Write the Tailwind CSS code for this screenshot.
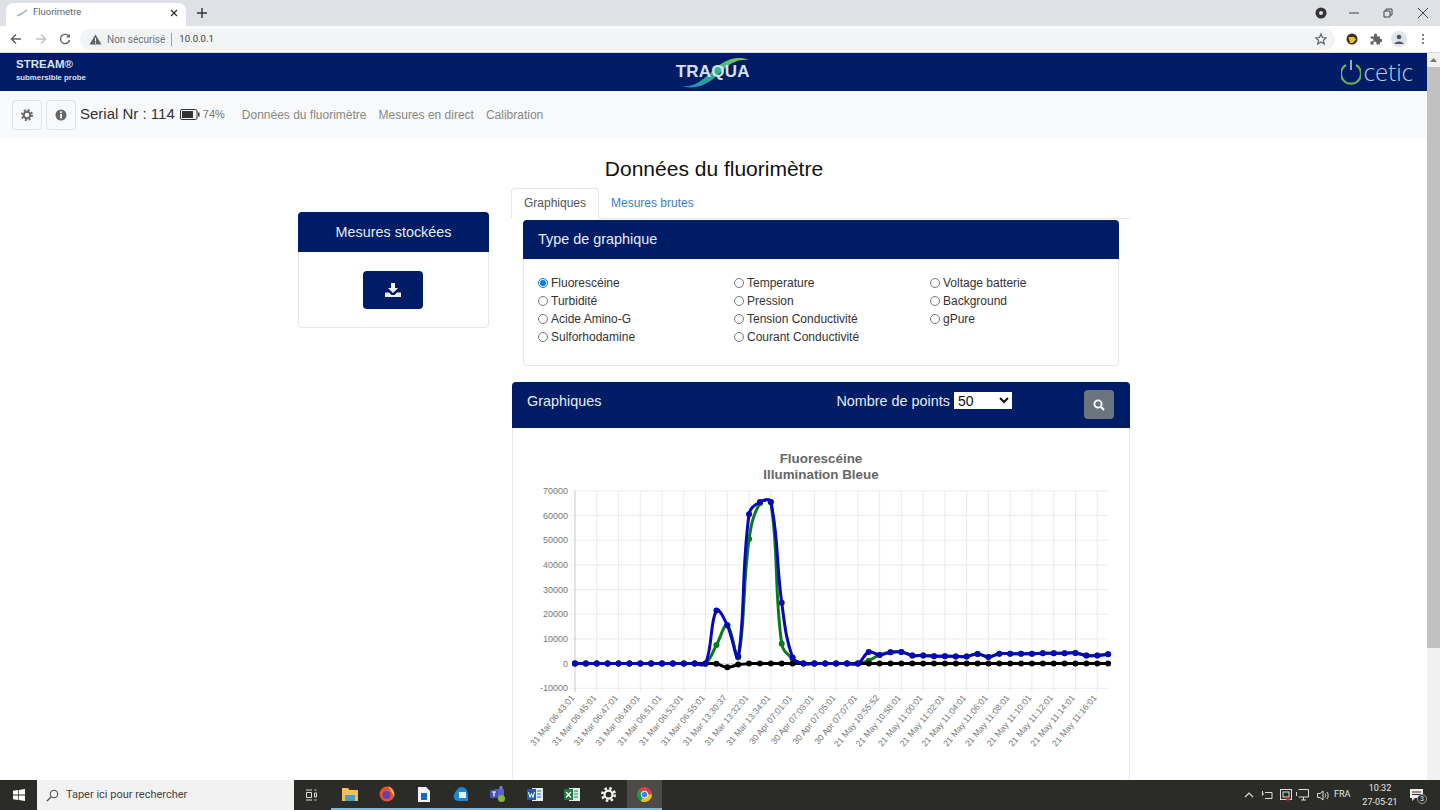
<!DOCTYPE html>
<html lang="fr">
<head>
    <meta charset="UTF-8">
    <meta name="viewport" content="width=device-width, initial-scale=1.0">
    <title>Fluorimetre</title>
    <script src="https://cdn.jsdelivr.net/npm/@tailwindcss/browser@4"></script>
</head>
<body class="bg-white font-['Liberation_Sans',Arial,sans-serif]">
<div class="h-[810px] w-[1440px] flex flex-col overflow-hidden">

    <!-- chrome: tab strip -->
    <div class="h-[26px] bg-[#dee1e6] flex items-end font-['Roboto',sans-serif]">
        <div class="ml-[6px] w-[180px] h-[23px] bg-white rounded-t-lg flex items-center pl-[10px] pr-[8px] pb-[4px]">
            <svg width="12" height="8" viewBox="0 0 12 8"><path d="M1 7 C4 6 7 4 11 1" stroke="#7fb8a0" stroke-width="1.2" fill="none"/></svg>
            <span class="ml-[5px] text-[9.5px] text-[#5f6368]">Fluorimetre</span>
            <svg class="ml-auto" width="8" height="8" viewBox="0 0 8 8"><path d="M1 1 L7 7 M7 1 L1 7" stroke="#333" stroke-width="1.3"/></svg>
        </div>
        <svg class="ml-[11px] mb-[8px]" width="10" height="10" viewBox="0 0 10 10"><path d="M5 0 V10 M0 5 H10" stroke="#333" stroke-width="1.4"/></svg>
        <div class="ml-auto flex items-center h-[26px]">
            <svg class="ml-px" width="12" height="12" viewBox="0 0 12 12"><circle cx="6" cy="6" r="5.5" fill="#333"/><circle cx="6" cy="6" r="2" fill="#ddd"/></svg>
            <svg class="ml-[22px]" width="10" height="10" viewBox="0 0 10 10"><path d="M0 5 H10" stroke="#444" stroke-width="1"/></svg>
            <svg class="ml-[24px]" width="10" height="10" viewBox="0 0 10 10"><path d="M1 3 H7 V9 H1 Z M3 3 V1 H9 V7 H7" stroke="#444" stroke-width="1" fill="none"/></svg>
            <svg class="ml-[25px] mr-[12px]" width="10" height="10" viewBox="0 0 10 10"><path d="M0 0 L10 10 M10 0 L0 10" stroke="#444" stroke-width="1"/></svg>
        </div>
    </div>

    <!-- chrome: toolbar -->
    <div class="h-[27px] bg-white flex items-center font-['Roboto',sans-serif] border-b border-[#dadce0]">
        <svg class="ml-[10px]" width="12" height="12" viewBox="0 0 12 12"><path d="M11 6 H1.5 M6 1.5 L1.5 6 L6 10.5" stroke="#5f6368" stroke-width="1.5" fill="none"/></svg>
        <svg class="ml-[13px]" width="12" height="12" viewBox="0 0 12 12"><path d="M1 6 H10.5 M6 1.5 L10.5 6 L6 10.5" stroke="#bdc1c6" stroke-width="1.5" fill="none"/></svg>
        <svg class="ml-[12px]" width="12" height="12" viewBox="0 0 12 12"><path d="M10 3.5 A4.6 4.6 0 1 0 10.6 7" stroke="#5f6368" stroke-width="1.4" fill="none"/><path d="M10.8 0.8 V4.6 H7 Z" fill="#5f6368"/></svg>
        <div class="ml-[9px] w-[1255px] h-[21px] bg-[#f1f3f4] rounded-full flex items-center pl-[9px] relative">
            <svg width="13" height="11" viewBox="0 0 13 11"><path d="M6.5 0.5 L12.5 10.5 H0.5 Z" fill="#5f6368"/><path d="M6.5 4 V7.2 M6.5 8.2 V9.4" stroke="#fff" stroke-width="1.1"/></svg>
            <span class="ml-[5px] text-[10px] text-[#70757a]">Non sécurisé</span>
            <span class="ml-[6px] h-[13px] w-px bg-[#9aa0a6]"></span>
            <span class="ml-[7px] text-[9.6px] text-[#3c4043]">10.0.0.1</span>
            <svg class="ml-auto mr-[8px]" width="12" height="12" viewBox="0 0 24 24"><path d="M12 2 L15 9 L22.5 9.7 L16.8 14.6 L18.6 22 L12 18 L5.4 22 L7.2 14.6 L1.5 9.7 L9 9 Z" fill="none" stroke="#5f6368" stroke-width="2.4"/></svg>
        </div>
        <svg class="ml-[11px]" width="12" height="12" viewBox="0 0 12 12"><circle cx="6" cy="6" r="5.5" fill="#3a3320"/><path d="M2.5 4 H8 L10 6.5 L7 10 H4 Z" fill="#f0bb2c"/></svg>
        <svg class="ml-[12px]" width="12" height="12" viewBox="0 0 12 12"><path d="M0.5 3.5 H4 V2 A1.5 1.5 0 0 1 7 2 V3.5 H10 V6 H11 A1.5 1.5 0 0 1 11 9 H10 V11.5 H6.5 V10 A1.5 1.5 0 0 0 3.5 10 V11.5 H0.5 V8.5 H2 A1.5 1.5 0 0 0 2 5.5 H0.5 Z" fill="#5f6368"/></svg>
        <div class="ml-[9px] w-[16px] h-[16px] rounded-full bg-[#dfe3ea] flex items-center justify-center">
            <svg width="10" height="10" viewBox="0 0 10 10"><circle cx="5" cy="3" r="2.3" fill="#4d5561"/><path d="M0.5 10 C0.5 6.5 9.5 6.5 9.5 10 Z" fill="#4d5561"/></svg>
        </div>
        <svg class="ml-[14px]" width="4" height="12" viewBox="0 0 4 12"><circle cx="2" cy="2" r="1.1" fill="#5f6368"/><circle cx="2" cy="6" r="1.1" fill="#5f6368"/><circle cx="2" cy="10" r="1.1" fill="#5f6368"/></svg>
    </div>

    <!-- page + scrollbar -->
    <div class="flex-1 min-h-0 flex">
        <div class="flex-1 min-w-0 overflow-hidden">

            <header class="h-[38px] bg-[#001c66] flex items-center justify-between">
                <div class="ml-[16px] mb-[3px] text-[#d9e2ee] font-bold leading-none">
                    <div class="text-[11.5px]">STREAM®</div>
                    <div class="text-[7.8px] mt-[3px]">submersible probe</div>
                </div>
                <div class="relative w-[76px] h-[38px] flex items-center justify-center ml-[-1px]">
                    <svg class="absolute left-0 top-0" width="76" height="38" viewBox="0 0 76 38">
                        <defs>
                            <linearGradient id="swoosh" x1="0" y1="1" x2="1" y2="0">
                                <stop offset="0" stop-color="#1f8fb0"/>
                                <stop offset="0.55" stop-color="#2fb58c"/>
                                <stop offset="1" stop-color="#8ccb4e"/>
                            </linearGradient>
                        </defs>
                        <path d="M7 33 C22 35 30 24 42 14 C50 7 62 2 74 7 C62 6 54 11 46 19 C36 29 22 38 7 33 Z" fill="url(#swoosh)"/>
                    </svg>
                    <span class="relative text-[17px] font-bold tracking-[0.2px] text-[#d6e0ec]">TRAQUA</span>
                </div>
                <div class="mr-[14px] flex items-center relative">
                    <svg width="20" height="26" viewBox="1 0 20 26"><path d="M6 6 A10 10 0 1 0 16 6" fill="none" stroke="#6fae55" stroke-width="2.2"/><path d="M11 1 V11" stroke="#dfe6ee" stroke-width="1.4"/></svg>
                    <span class="ml-[3px] text-[24px] leading-none font-['Open_Sans',sans-serif] font-light text-[#b9cbe3]">cetic</span>
                </div>
            </header>

            <nav class="h-[47px] bg-[#f8f9fa] flex items-center pl-[12px]">
                <button class="w-[30px] h-[30px] border border-[#dfe1e4] rounded flex items-center justify-center">
                    <svg width="12" height="12" viewBox="0 0 12 12"><circle cx="6" cy="6" r="3.3" fill="none" stroke="#666" stroke-width="2"/><circle cx="6" cy="6" r="5" fill="none" stroke="#666" stroke-width="2" stroke-dasharray="2 1.93"/></svg>
                </button>
                <button class="ml-[4px] w-[30px] h-[30px] border border-[#dfe1e4] rounded flex items-center justify-center">
                    <svg width="12" height="12" viewBox="0 0 12 12"><circle cx="6" cy="6" r="5.5" fill="#666"/><path d="M6 5 V9.5 M6 2.3 V3.9" stroke="#fff" stroke-width="1.8"/></svg>
                </button>
                <span class="ml-[4px] text-[15px] text-[#333]">Serial Nr : 114</span>
                <svg class="ml-[5px]" width="20" height="11" viewBox="0 0 20 11"><rect x="0.5" y="0.5" width="16.5" height="10" rx="1.5" fill="none" stroke="#333"/><rect x="2" y="2" width="11" height="7" fill="#333"/><rect x="18" y="3.5" width="1.5" height="4" fill="#333"/></svg>
                <span class="ml-[3px] text-[11px] text-[#777]">74%</span>
                <a class="ml-[17px] text-[12px] text-[#888]">Données du fluorimètre</a>
                <a class="ml-[12px] text-[12px] text-[#888]">Mesures en direct</a>
                <a class="ml-[12px] text-[12px] text-[#888]">Calibration</a>
            </nav>

            <main class="ml-[298px] w-[832px]">
                <h1 class="h-[50px] pt-[12px] flex items-center justify-center text-[21px] text-[#111]">Données du fluorimètre</h1>
                <div class="flex items-start gap-[22px]">

                    <section class="w-[191px] mt-[24px] h-[116px] border border-[#e6e6e6] rounded">
                        <div class="h-[40px] pt-[2px] mx-[-1px] mt-[-1px] bg-[#001c66] rounded-t flex items-center justify-center text-[14.4px] text-[#e6edf5]">Mesures stockées</div>
                        <div class="flex justify-center pt-[19px] pr-[1px]">
                            <button class="w-[60px] h-[38px] bg-[#001c66] rounded flex items-center justify-center">
                                <svg width="16" height="14" viewBox="0 0 16 14"><path d="M6 0 H10 V5 H13 L8 10 L3 5 H6 Z" fill="#f2f2f2"/><path d="M0 9.5 H4 L6.5 12 H9.5 L12 9.5 H16 V14 H0 Z" fill="#f2f2f2"/></svg>
                            </button>
                        </div>
                    </section>

                    <div class="w-[619px]">
                        <div class="h-[31px] flex border-b border-[#e6e6e6] text-[12px]">
                            <div class="w-[88px] h-[31px] pb-[2px] border border-[#e6e6e6] border-b-white rounded-t flex items-center justify-center text-[#555]">Graphiques</div>
                            <div class="ml-[12px] h-[30px] flex items-center text-[#3b7fc4]">Mesures brutes</div>
                        </div>

                        <section class="ml-[12px] mt-px w-[596px] h-[146px] border border-[#e6e6e6] rounded">
                            <div class="h-[39px] mx-[-1px] mt-[-1px] bg-[#001c66] rounded-t flex items-center pl-[15px] text-[14.4px] text-[#e6edf5]">Type de graphique</div>
                            <form class="grid grid-cols-[196px_196px_160px] pl-[14px] pt-[15px] text-[12px] leading-[18px] text-[#333]">
                                <label class="flex items-center"><input type="radio" name="g" checked class="w-[10px] h-[10px] mr-[3px] mb-[1px]"> Fluorescéine</label>
                                <label class="flex items-center"><input type="radio" name="g" class="w-[10px] h-[10px] mr-[3px] mb-[1px]"> Temperature</label>
                                <label class="flex items-center"><input type="radio" name="g" class="w-[10px] h-[10px] mr-[3px] mb-[1px]"> Voltage batterie</label>
                                <label class="flex items-center"><input type="radio" name="g" class="w-[10px] h-[10px] mr-[3px] mb-[1px]"> Turbidité</label>
                                <label class="flex items-center"><input type="radio" name="g" class="w-[10px] h-[10px] mr-[3px] mb-[1px]"> Pression</label>
                                <label class="flex items-center"><input type="radio" name="g" class="w-[10px] h-[10px] mr-[3px] mb-[1px]"> Background</label>
                                <label class="flex items-center"><input type="radio" name="g" class="w-[10px] h-[10px] mr-[3px] mb-[1px]"> Acide Amino-G</label>
                                <label class="flex items-center"><input type="radio" name="g" class="w-[10px] h-[10px] mr-[3px] mb-[1px]"> Tension Conductivité</label>
                                <label class="flex items-center"><input type="radio" name="g" class="w-[10px] h-[10px] mr-[3px] mb-[1px]"> gPure</label>
                                <label class="flex items-center"><input type="radio" name="g" class="w-[10px] h-[10px] mr-[3px] mb-[1px]"> Sulforhodamine</label>
                                <label class="flex items-center"><input type="radio" name="g" class="w-[10px] h-[10px] mr-[3px] mb-[1px]"> Courant Conductivité</label>
                            </form>
                        </section>

                        <section class="ml-px mt-[16px] w-[618px] border border-[#e6e6e6] rounded">
                            <div class="h-[46px] mx-[-1px] mt-[-1px] bg-[#001c66] rounded-t flex items-center text-[14.4px] text-[#e6edf5] relative">
                                <span class="ml-[15px] mb-[6px]">Graphiques</span>
                                <span class="ml-[235px] mb-[6px]">Nombre de points</span>
                                <select class="ml-[4px] mb-[9px] w-[58px] h-[17px] bg-white text-[#111] text-[14px] leading-none">
                                    <option>50</option>
                                    <option>100</option>
                                </select>
                                <button class="ml-[72px] mb-[1px] w-[30px] h-[29px] bg-[#6c757d] rounded flex items-center justify-center">
                                    <svg width="12" height="12" viewBox="0 0 12 12"><circle cx="5" cy="5" r="3.6" fill="none" stroke="#fff" stroke-width="1.8"/><path d="M7.8 7.8 L11 11" stroke="#fff" stroke-width="2"/></svg>
                                </button>
                            </div>
                            <svg id="chart" class="block" width="616" height="352" viewBox="513 428 616 352"></svg>
                        </section>
                    </div>
                </div>
            </main>
        </div>

        <!-- scrollbar -->
        <div class="w-[13px] bg-[#f1f1f1] flex flex-col items-center">
            <svg class="mt-[5px]" width="7" height="4" viewBox="0 0 7 4"><path d="M3.5 0 L7 4 H0 Z" fill="#777"/></svg>
            <div class="mt-[5px] w-full h-[581px] bg-[#c1c1c1]"></div>
        </div>
    </div>

    <!-- windows taskbar -->
    <footer class="h-[30px] bg-[#2b2b28] flex items-center text-[#e8e8e8] font-['Roboto',sans-serif]">
        <div class="w-[37px] flex justify-center">
            <svg width="12" height="12" viewBox="0 0 12 12"><path d="M0 1.8 L5.3 1 V5.6 H0 Z M6 0.9 L12 0 V5.6 H6 Z M0 6.4 H5.3 V11 L0 10.2 Z M6 6.4 H12 V12 L6 11.1 Z" fill="#fff"/></svg>
        </div>
        <div class="w-[257px] h-[30px] bg-[#f2f2f2] flex items-center pl-[9px]">
            <svg width="13" height="13" viewBox="0 0 13 13"><circle cx="8" cy="5" r="3.8" fill="none" stroke="#444"/><path d="M5.2 7.8 L1 12" stroke="#444" stroke-width="1.2"/></svg>
            <span class="ml-[7px] text-[11px] text-[#444]">Taper ici pour rechercher</span>
        </div>
        <div class="ml-[11px] w-[12px]">
            <svg width="12" height="12" viewBox="0 0 12 12"><path d="M1 1 H7 M1 11 H7 M9.5 1 H11.5 M9.5 11 H11.5 M9.5 4 H11.5 V8 H9.5 Z M1.5 3.5 H6.5 V8.5 H1.5 Z" stroke="#ddd" fill="none"/></svg>
        </div>
        <div class="ml-[14px] flex h-[30px]">
            <div class="w-[37px] border-b-2 border-[#76b9ed] flex items-center justify-center">
                <svg width="16" height="14" viewBox="0 0 16 14"><path d="M0 1 H6 L7.5 3 H16 V14 H0 Z" fill="#f2c14e"/><rect x="3" y="8" width="10" height="6" fill="#4a9dcc"/></svg>
            </div>
            <div class="w-[37px] border-b-2 border-[#76b9ed] flex items-center justify-center">
                <svg width="16" height="16" viewBox="0 0 16 16"><circle cx="8" cy="8" r="7.5" fill="#e8522a"/><circle cx="7.5" cy="9" r="4" fill="#6a3fb5"/><path d="M9 0 C14 2 16 7 15 11 C13 6 11 4 9 0 Z" fill="#ffb52e"/></svg>
            </div>
            <div class="w-[37px] border-b-2 border-[#76b9ed] flex items-center justify-center">
                <svg width="12" height="15" viewBox="0 0 12 15"><path d="M0 0 H8 L12 4 V15 H0 Z" fill="#f4f6f8"/><rect x="3" y="6" width="6" height="7" fill="#1668c5"/></svg>
            </div>
            <div class="w-[37px] border-b-2 border-[#76b9ed] flex items-center justify-center">
                <svg width="15" height="15" viewBox="0 0 15 15"><path d="M8 0 C13 0 15 4 15 8 V14 H6 C2 14 0 11 1 8 C2 4 5 1 8 0 Z" fill="#1c87d6"/><path d="M6 5 H13 V11 H6 Z" fill="#e8f1f8"/></svg>
            </div>
            <div class="w-[37px] border-b-2 border-[#76b9ed] flex items-center justify-center">
                <svg width="16" height="16" viewBox="0 0 16 16"><rect x="4" y="3" width="10" height="9" rx="1" fill="#5b5fc7"/><rect x="0" y="4" width="8" height="8" fill="#464eb8"/><path d="M2 6 H6 M4 6 V10.5" stroke="#fff" stroke-width="1.2"/><circle cx="11" cy="1.8" r="1.7" fill="#7b83eb"/><circle cx="11.5" cy="12.5" r="3.5" fill="#7fba3c"/></svg>
            </div>
            <div class="w-[37px] border-b-2 border-[#76b9ed] flex items-center justify-center">
                <svg width="16" height="15" viewBox="0 0 16 15"><rect x="5" y="1" width="11" height="13" fill="#e6eef8"/><path d="M10 4 H14 M10 7 H14 M10 10 H14" stroke="#2b65b5"/><rect x="0" y="2" width="9" height="11" fill="#1f5bb0"/><path d="M1.5 5 L3 10.5 L4.5 6.5 L6 10.5 L7.5 5" stroke="#fff" fill="none"/></svg>
            </div>
            <div class="w-[37px] border-b-2 border-[#76b9ed] flex items-center justify-center">
                <svg width="16" height="15" viewBox="0 0 16 15"><rect x="5" y="1" width="11" height="13" fill="#e2f0e6"/><path d="M10 4 H14 M10 7 H14 M10 10 H14" stroke="#1e7a45"/><rect x="0" y="2" width="9" height="11" fill="#1a7a41"/><path d="M2 5 L7 10.5 M7 5 L2 10.5" stroke="#fff" stroke-width="1.2"/></svg>
            </div>
            <div class="w-[37px] border-b-2 border-[#76b9ed] flex items-center justify-center">
                <svg width="15" height="15" viewBox="0 0 12 12"><circle cx="6" cy="6" r="3.2" fill="none" stroke="#f4f4f4" stroke-width="1.8"/><circle cx="6" cy="6" r="5" fill="none" stroke="#f4f4f4" stroke-width="2" stroke-dasharray="2 1.93"/></svg>
            </div>
            <div class="w-[35px] border-b-2 border-[#76b9ed] bg-[#4b4b48] flex items-center justify-center">
                <svg width="15" height="15" viewBox="0 0 16 16"><circle cx="8" cy="8" r="8" fill="#db4437"/><path d="M8 8 L15.9 8 A8 8 0 0 1 4 15 Z" fill="#f4c20d"/><path d="M8 8 L4 15 A8 8 0 0 1 1 4 Z" fill="#0f9d58"/><circle cx="8" cy="8" r="3.6" fill="#4285f4" stroke="#fff"/></svg>
            </div>
        </div>
        <div class="ml-auto flex items-center text-[9px]">
            <svg width="10" height="6" viewBox="0 0 10 6"><path d="M1 5 L5 1 L9 5" stroke="#ddd" stroke-width="1.2" fill="none"/></svg>
            <svg class="ml-[8px]" width="12" height="9" viewBox="0 0 12 9"><path d="M3 1.5 H10 V7.5 H3 M0.5 0 V4 M2 3 H0 V5" stroke="#ddd" fill="none"/></svg>
            <svg class="ml-[6px]" width="12" height="12" viewBox="0 0 12 12"><rect x="0.5" y="0.5" width="11" height="10" fill="none" stroke="#ddd"/><rect x="3" y="3" width="6" height="5" fill="none" stroke="#ddd"/><circle cx="8" cy="10" r="1.8" fill="#e8202a"/></svg>
            <svg class="ml-[4px]" width="13" height="12" viewBox="0 0 13 12"><path d="M2.5 0.5 H12.5 V8 H2.5 M7.5 8 V11 M5 11 H10 M0.5 3 V7" stroke="#ddd" fill="none"/></svg>
            <svg class="ml-[8px]" width="13" height="11" viewBox="0 0 13 11"><path d="M0.5 3.5 H3 L6 1 V10 L3 7.5 H0.5 Z M8 3.5 C9 5 9 6 8 7.5 M10 2 C11.5 4 11.5 7 10 9" stroke="#ddd" fill="none"/></svg>
            <span class="ml-[4px] w-[20px]">FRA</span>
            <div class="ml-[2px] w-[48px] text-center leading-[14px]">
                <div>10:32</div>
                <div>27-05-21</div>
            </div>
            <div class="ml-[6px] mr-[17px] relative w-[13px] h-[12px]">
                <svg width="13" height="12" viewBox="0 0 13 12"><path d="M0 0 H13 V9 H5 L2 12 V9 H0 Z" fill="#eee"/><path d="M2 3 H11 M2 5.5 H11" stroke="#2b2b28"/></svg>
                <span class="absolute left-[7px] top-[5px] w-[10px] h-[10px] rounded-full bg-[#2b2b28] border border-[#999] text-[7px] leading-[8px] text-center">3</span>
            </div>
        </div>
    </footer>
</div>

<script>
    // same spline as chart.js (tension 0.4)
    const labels = ['31 Mar 06:43:01','31 Mar 06:45:01','31 Mar 06:47:01','31 Mar 06:49:01','31 Mar 06:51:01','31 Mar 06:53:01','31 Mar 06:55:01','31 Mar 13:30:37','31 Mar 13:32:01','31 Mar 13:34:01','30 Apr 07:01:01','30 Apr 07:03:01','30 Apr 07:05:01','30 Apr 07:07:01','21 May 10:55:52','21 May 10:58:01','21 May 11:00:01','21 May 11:02:01','21 May 11:04:01','21 May 11:06:01','21 May 11:08:01','21 May 11:10:01','21 May 11:12:01','21 May 11:14:01','21 May 11:16:01'];

    const zeros = n => new Array(n).fill(0);
    const blue = [...zeros(13), 21500, 15500, 3000, 60500, 65500, 65500, 24700, 2500, ...zeros(6), 4700, 3500, 4600, 4700, 3300, 3300, 3000, 3000, 2900, 2900, 3900, 2700, 4000, 4000, 4000, 4000, 4200, 4200, 4200, 4300, 3300, 3300, 3800];
    const green = [...zeros(13), 7500, 15500, 2500, 50500, 65000, 65500, 8000, 2000, ...zeros(6), 1200, 3500, 4600, 4700, 3300, 3300, 3000, 3000, 2900, 2900, 3900, 2700, 4000, 4000, 4000, 4000, 4200, 4200, 4200, 4300, 3300, 3300, 3800];
    const black = [...zeros(13), -100, -1500, -400, ...zeros(34)];

    const xAt = i => 575 + i * 10.88;
    const yAt = v => 663.6 - v * 24.68 / 10000;

    function linePath(values) {
        const pts = values.map((v, i) => [xAt(i), yAt(v)]);
        let d = `M${pts[0][0]} ${pts[0][1]}`;
        const ctrl = pts.map((p, i) => {
            const a = pts[i - 1] || p, b = pts[i + 1] || p;
            const d01 = Math.hypot(p[0] - a[0], p[1] - a[1]);
            const d12 = Math.hypot(b[0] - p[0], b[1] - p[1]);
            const tot = (d01 + d12) || 1;
            const fa = 0.4 * d01 / tot, fb = 0.4 * d12 / tot;
            return {
                prev: [p[0] - fa * (b[0] - a[0]), p[1] - fa * (b[1] - a[1])],
                next: [p[0] + fb * (b[0] - a[0]), p[1] + fb * (b[1] - a[1])]
            };
        });
        for (let i = 1; i < pts.length; i++) {
            d += `C${ctrl[i - 1].next[0]} ${ctrl[i - 1].next[1]} ${ctrl[i].prev[0]} ${ctrl[i].prev[1]} ${pts[i][0]} ${pts[i][1]}`;
        }
        return d;
    }

    function series(values, color) {
        let s = `<path d="${linePath(values)}" fill="none" stroke="${color}" stroke-width="3"/>`;
        values.forEach((v, i) => { s += `<circle cx="${xAt(i)}" cy="${yAt(v)}" r="3" fill="${color}"/>`; });
        return s;
    }

    let svg = '';
    svg += '<text x="821" y="463" text-anchor="middle" font-size="13.4" font-weight="bold" fill="#666">Fluorescéine</text>';
    svg += '<text x="821" y="479" text-anchor="middle" font-size="13.4" font-weight="bold" fill="#666">Illumination Bleue</text>';

    for (let v = 70000; v >= -10000; v -= 10000) {
        const y = yAt(v);
        svg += `<line x1="571" x2="1108" y1="${y}" y2="${y}" stroke="${v === 0 ? '#d8d8d8' : '#ebebeb'}"/>`;
        svg += `<text x="568" y="${y + 3}" text-anchor="end" font-size="9" fill="#777">${v}</text>`;
    }
    labels.forEach((label, n) => {
        const x = xAt(n * 2);
        svg += `<line x1="${x}" x2="${x}" y1="491" y2="692" stroke="${n === 0 ? '#c8c8c8' : '#ebebeb'}"/>`;
        svg += `<text x="${x}" y="698" text-anchor="end" font-size="8.7" fill="#777" transform="rotate(-50 ${x} 698)">${label}</text>`;
    });

    svg += series(green, '#0a7a1e');
    svg += series(black, '#000000');
    svg += series(blue, '#0808b8');

    document.getElementById('chart').innerHTML = svg;
</script>
</body>
</html>
